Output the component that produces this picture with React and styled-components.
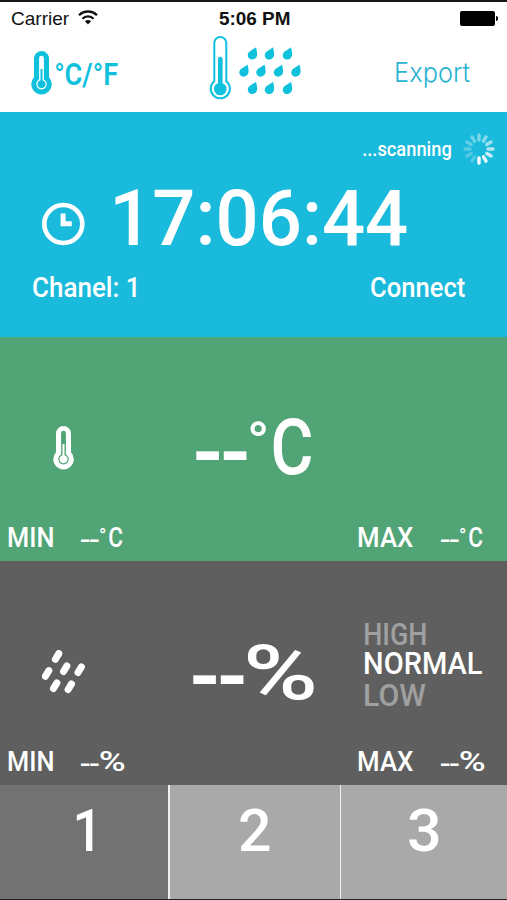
import React, { useLayoutEffect, useState } from 'react';
import styled, { createGlobalStyle } from 'styled-components';

const GlobalStyle = createGlobalStyle`
  * {
    box-sizing: border-box;
  }

  body {
    margin: 0;
    background: #fff;
  }
`;

const Screen = styled.div`
  display: flex;
  flex-direction: column;
  width: 507px;
  height: 900px;
  overflow: hidden;
  border-top: 2px solid #151517;
  border-bottom: 1px solid #222;
  background: #fff;
  color: #fff;
  font-family: Roboto, 'Liberation Sans', sans-serif;
`;

const StatusBar = styled.div`
  display: grid;
  grid-template-columns: 1fr auto 1fr;
  align-items: center;
  height: 32px;
  padding: 0 9px 0 11px;
  color: #111;
`;

const Carrier = styled.div`
  display: flex;
  align-items: center;
  gap: 9px;

  svg {
    margin-bottom: 1px;
  }
`;

const Battery = styled.div`
  justify-self: end;
  display: flex;
  align-items: center;
  gap: 1px;

  &::before {
    content: '';
    width: 35px;
    height: 15px;
    border-radius: 2px;
    background: #000;
  }

  &::after {
    content: '';
    width: 2px;
    height: 5px;
    border-radius: 0 2px 2px 0;
    background: #000;
  }
`;

const Header = styled.header`
  display: flex;
  align-items: flex-start;
  height: 78px;
  padding: 2px 37px 0 31px;
  color: #0fc1dd;
`;

const UnitSwitch = styled.div`
  display: flex;
  align-items: center;
  gap: 3px;
  width: 178px;
  margin-top: 15px;
`;

const Logo = styled.div`
  flex: 1;
`;

const ExportButton = styled.div`
  margin-top: 23px;
  color: #27b4d2;
`;

const ClockPanel = styled.section`
  height: 225px;
  background: #1abadc;
`;

const ScanRow = styled.div`
  display: flex;
  align-items: center;
  justify-content: flex-end;
  gap: 12px;
  height: 73px;
  padding-right: 12px;
`;

const TimeRow = styled.div`
  display: flex;
  align-items: center;
  gap: 29px;
  height: 66px;
  padding-left: 41px;

  svg {
    margin-top: 12px;
  }
`;

const ChannelRow = styled.div`
  display: flex;
  align-items: center;
  justify-content: space-between;
  height: 73px;
  padding: 0 42px 0 33px;
`;

const Panel = styled.section`
  height: 224px;
  padding-top: 45px;
  background: ${({ $bg }) => $bg};
`;

const PanelMain = styled.div`
  display: grid;
  grid-template-columns: ${({ $columns }) => $columns};
  align-items: center;
  height: 132px;
`;

const IconCell = styled.div`
  display: flex;
  justify-content: center;
`;

const MinMaxRow = styled.div`
  display: grid;
  grid-template-columns: 73px 277px 83px auto;
  align-items: center;
  height: 47px;
  padding-left: 8px;
`;

const ReadingRow = styled.div`
  display: flex;
  align-items: center;
`;

const Levels = styled.div`
  margin-bottom: 12px;
`;

const Level = styled.div`
  display: flex;
  align-items: center;
  height: ${({ $height }) => $height}px;
  color: ${({ $active }) => ($active ? '#fff' : '#a0a0a0')};
`;

const Tabs = styled.nav`
  display: flex;
  flex: 1;
`;

const Tab = styled.div`
  display: flex;
  justify-content: center;
  width: ${({ $width }) => $width}px;
  padding-top: 18px;
  border-left: ${({ $divider }) => $divider}px solid #efefef;
  background: ${({ $active }) => ($active ? '#727272' : '#a9a9a9')};
`;

const FitBox = styled.span`
  display: block;
  flex: none;
  width: ${({ $width }) => $width}px;
  margin: 0 0 ${({ $lift }) => $lift || 0}px ${({ $gap }) => $gap || 0}px;
  padding-top: 2px;
  font-family: ${({ $family }) => $family};
  font-size: ${({ $size }) => $size}px;
  font-weight: ${({ $weight }) => $weight};
  letter-spacing: ${({ $track }) => $track}px;
  line-height: 0.88;
  white-space: nowrap;
`;

const FitInner = styled.span`
  display: inline-block;
  vertical-align: top;
  transform-origin: left center;
`;

// Text squeezed or stretched so its ink fills exactly `width`
const FitText = ({ children, width, size, weight = 500, family = 'Roboto', track = 0, gap, lift }) => {
  const [transform, setTransform] = useState('none');

  useLayoutEffect(() => {
    const ctx = document.createElement('canvas').getContext('2d');
    ctx.font = `${weight} ${size}px "${family}"`;
    ctx.letterSpacing = `${track}px`;
    const m = ctx.measureText(children);
    const ink = m.actualBoundingBoxLeft + m.actualBoundingBoxRight;
    setTransform(`scaleX(${width / ink}) translateX(${m.actualBoundingBoxLeft}px)`);
  }, [children, width, size, weight, family, track]);

  return (
    <FitBox
      $width={width}
      $size={size}
      $weight={weight}
      $family={`'${family}', sans-serif`}
      $track={track}
      $gap={gap}
      $lift={lift}
    >
      <FitInner style={{ transform }}>{children}</FitInner>
    </FitBox>
  );
};

const Reading = ({ unit, big }) => {
  const k = big ? 1 : 0.36;
  return (
    <ReadingRow>
      <FitText width={50.5 * k} size={78 * k} weight={big ? 700 : 500} track={-4.5 * k} lift={-11 * k}>--</FitText>
      {unit === 'C' ? (
        <>
          <FitText width={16 * k} size={56 * k} gap={3.5 * k} lift={big ? 10 : 3}>°</FitText>
          <FitText width={38.5 * k} size={77 * k} gap={7 * k}>C</FitText>
        </>
      ) : (
        <FitText width={67 * k} size={76 * k} gap={3.5 * k}>%</FitText>
      )}
    </ReadingRow>
  );
};

const MinMax = ({ unit }) => (
  <MinMaxRow>
    <FitText width={45} size={27.5}>MIN</FitText>
    <Reading unit={unit} />
    <FitText width={55} size={27.5}>MAX</FitText>
    <Reading unit={unit} />
  </MinMaxRow>
);

const WifiIcon = () => (
  <svg width="20" height="15" viewBox="0 0 20 15" fill="none" stroke="#111" strokeWidth="2.3">
    <path d="M1 5.2A12.8 12.8 0 0 1 19 5.2" />
    <path d="M4.4 8.7A8 8 0 0 1 15.6 8.7" />
    <path d="M6.9 11.3a4.4 4.4 0 0 1 6.2 0L10 14.4z" fill="#111" stroke="none" />
  </svg>
);

const Thermometer = ({ hole }) => (
  <svg width="21" height="44" viewBox="0 0 21 44">
    <path
      d="M3 7.5a7.5 7.5 0 0 1 15 0v18.7a10.3 10.3 0 1 1-15 0z"
      fill="currentColor"
    />
    <path d="M8.1 7.2a2.4 2.4 0 0 1 4.8 0v21.3a5.3 5.3 0 1 1-4.8 0z" fill={hole} />
    <path d="M9.5 18h2v11.2a4.1 4.1 0 1 1-2 0z" fill="currentColor" />
  </svg>
);

const drops = [
  [43.5, 17.5], [60.5, 17.5], [78.5, 17.5],
  [35, 34.7], [52, 34.7], [69.5, 34.7], [87, 34.7],
  [43.5, 52], [60.5, 52], [78.5, 52],
];

const LogoIcon = () => (
  <svg width="94" height="66" viewBox="0 0 94 66" fill="none">
    <path
      d="M5.3 7a6 6 0 0 1 12 0v38.2a9.6 9.6 0 1 1-12 0z"
      stroke="currentColor"
      strokeWidth="2"
    />
    <path d="M11.3 23v30" stroke="currentColor" strokeWidth="4.6" strokeLinecap="round" />
    <circle cx="11.3" cy="53" r="6.3" fill="currentColor" />
    {drops.map(([x, y]) => (
      <path
        key={`${x}-${y}`}
        transform={`translate(${x} ${y})`}
        d="M3.6-6.3C4-3.2 4.9-1 4.6 1.4 4.2 4.2 2.2 6 -.4 6-3 6-4.9 4-4.7 1.4-4.4-2.3.4-3.6 3.6-6.3z"
        fill="currentColor"
      />
    ))}
  </svg>
);

const ClockIcon = () => (
  <svg width="44" height="44" viewBox="0 0 44 44" fill="none" stroke="#fff">
    <circle cx="22.3" cy="22" r="19" strokeWidth="4.6" />
    <path d="M22.1 11.5v10.2h8.6" strokeWidth="5" />
  </svg>
);

// clockwise from twelve o'clock, brightest at six
const spokes = [0.42, 0.48, 0.56, 0.66, 0.78, 0.9, 1, 0.22, 0.25, 0.28, 0.32, 0.37];

const Spinner = () => (
  <svg width="32" height="32" viewBox="-16 -16 32 32" stroke="#fff" strokeWidth="3.4" strokeLinecap="round">
    {spokes.map((opacity, i) => (
      <path key={i} d="M0-9V-14" opacity={opacity} transform={`rotate(${i * 30})`} />
    ))}
  </svg>
);

const RainIcon = () => (
  <svg width="44" height="44" viewBox="0 0 44 44" fill="none" stroke="#fff" strokeWidth="7" strokeLinecap="round">
    <path d="M13.4 9.2l3.4-5.6M3.4 26.2l3.4-5.6M21.5 21.5l3.4-5.6M36 22.5l3.4-5.6M11.5 38.5l3.4-5.6M26.1 39.5l3.4-5.6" />
  </svg>
);

const App = () => (
  <>
    <GlobalStyle />
    <Screen>
      <StatusBar>
        <Carrier>
          <FitText width={58} size={18.5} weight={400} family="Liberation Sans">Carrier</FitText>
          <WifiIcon />
        </Carrier>
        <FitText width={71} size={18.5} weight={700} family="Liberation Sans">5:06 PM</FitText>
        <Battery />
      </StatusBar>
      <Header>
        <UnitSwitch>
          <Thermometer hole="#fff" />
          <FitText width={63} size={31} weight={600} lift={-2}>°C/°F</FitText>
        </UnitSwitch>
        <Logo>
          <LogoIcon />
        </Logo>
        <ExportButton>
          <FitText width={74} size={27} weight={300} family="Inter">Export</FitText>
        </ExportButton>
      </Header>

      <ClockPanel>
        <ScanRow>
          <FitText width={88} size={21}>...scanning</FitText>
          <Spinner />
        </ScanRow>
        <TimeRow>
          <ClockIcon />
          <FitText width={292} size={78} gap={1}>17:06:44</FitText>
        </TimeRow>
        <ChannelRow>
          <FitText width={103} size={28}>Chanel: 1</FitText>
          <FitText width={94} size={28}>Connect</FitText>
        </ChannelRow>
      </ClockPanel>

      <Panel $bg="#51a475">
        <PanelMain $columns="127px 69px auto">
          <IconCell><Thermometer hole="#51a475" /></IconCell>
          <span />
          <Reading unit="C" big />
        </PanelMain>
        <MinMax unit="C" />
      </Panel>

      <Panel $bg="#5f5f5f">
        <PanelMain $columns="127px 66px 172px auto">
          <IconCell><RainIcon /></IconCell>
          <span />
          <Reading unit="%" big />
          <Levels>
            <Level $height={29}><FitText width={61} size={30.5}>HIGH</FitText></Level>
            <Level $height={29} $active><FitText width={117} size={30.5}>NORMAL</FitText></Level>
            <Level $height={34}><FitText width={61} size={30.5}>LOW</FitText></Level>
          </Levels>
        </PanelMain>
        <MinMax unit="%" />
      </Panel>

      <Tabs>
        <Tab $width={168} $divider={0} $active><FitText width={17} size={59}>1</FitText></Tab>
        <Tab $width={172} $divider={2}><FitText width={30} size={59}>2</FitText></Tab>
        <Tab $width={167} $divider={1}><FitText width={30} size={59}>3</FitText></Tab>
      </Tabs>
    </Screen>
  </>
);

export default App;
